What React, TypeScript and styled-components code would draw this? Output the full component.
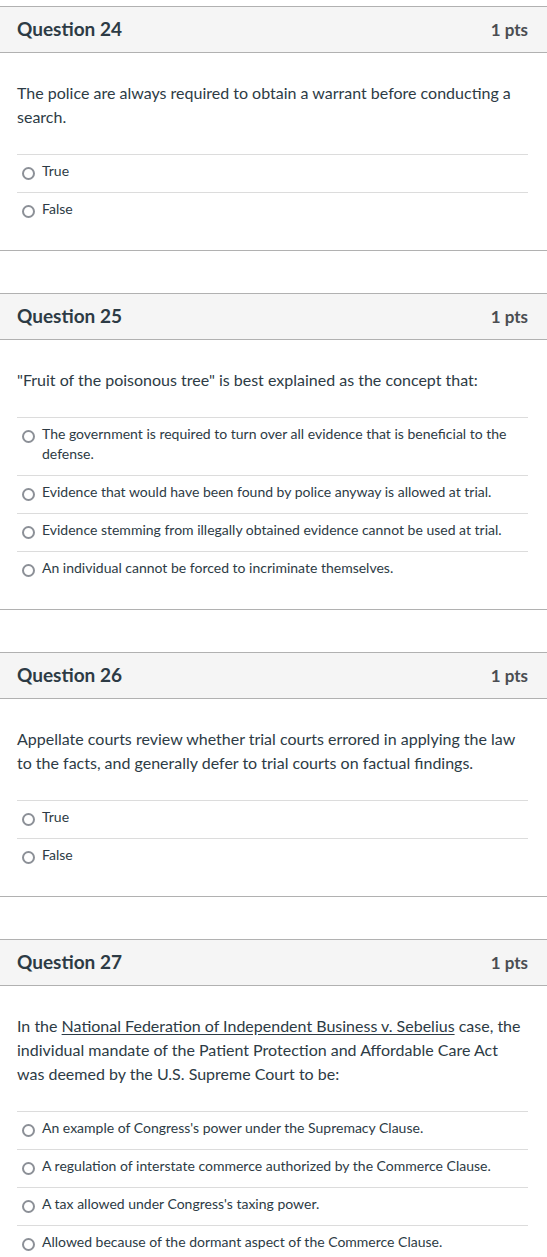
import React from "react";
import styled, { createGlobalStyle } from "styled-components";

const GlobalStyle = createGlobalStyle`
  html, body { margin: 0; padding: 0; background: #ffffff; }
  body { font-family: Lato, "Open Sans", Arial, sans-serif; color: #2d3b45; }
  * { box-sizing: border-box; }
`;

const Page = styled.div`
  display: flex;
  flex-direction: column;
  gap: 42px;
  padding-top: 6px;
  width: 547px;
`;

const Card = styled.section`
  border-top: 1px solid #b1b1b1;
  border-bottom: 1px solid #b1b1b1;
  background: #ffffff;
`;

const Header = styled.header`
  display: flex;
  align-items: baseline;
  justify-content: space-between;
  height: 46px;
  padding: 10px 19px 0 17px;
  background: #f5f5f5;
  border-bottom: 1px solid #b1b1b1;
`;

const Title = styled.h2`
  margin: 0;
  font-size: 19px;
  font-weight: 700;
  line-height: 24px;
  color: #2d3b45;
`;

const Points = styled.span`
  font-size: 17px;
  font-weight: 700;
  color: #4a4d52;
`;

const Body = styled.div`
  padding: 28px 19px 20px 17px;
`;

const Prompt = styled.p`
  margin: 0 0 25px;
  font-size: 16px;
  line-height: 24px;
  color: #2d3b45;
`;

const CaseLink = styled.span`
  text-decoration: underline;
  text-underline-offset: 2px;
`;

const Answers = styled.div`
  display: flex;
  flex-direction: column;
`;

const Answer = styled.label`
  display: flex;
  align-items: flex-start;
  gap: 7px;
  padding: 6px 0 11px 5px;
  border-top: 1px solid #dcdcdc;
  font-size: 14px;
  line-height: 20px;
  color: #2d3b45;
`;

const Radio = styled.span`
  flex: 0 0 13px;
  width: 13px;
  height: 13px;
  margin-top: 6px;
  border: 2px solid #8c9097;
  border-radius: 50%;
  background: #ffffff;
`;

const AnswerText = styled.span`
  flex: 1;
`;

type Q = {
  num: number;
  prompt: React.ReactNode;
  answers: string[];
};

const questions: Q[] = [
  {
    num: 24,
    prompt:
      "The police are always required to obtain a warrant before conducting a search.",
    answers: ["True", "False"],
  },
  {
    num: 25,
    prompt: '"Fruit of the poisonous tree" is best explained as the concept that:',
    answers: [
      "The government is required to turn over all evidence that is beneficial to the defense.",
      "Evidence that would have been found by police anyway is allowed at trial.",
      "Evidence stemming from illegally obtained evidence cannot be used at trial.",
      "An individual cannot be forced to incriminate themselves.",
    ],
  },
  {
    num: 26,
    prompt:
      "Appellate courts review whether trial courts errored in applying the law to the facts, and generally defer to trial courts on factual findings.",
    answers: ["True", "False"],
  },
  {
    num: 27,
    prompt: (
      <>
        In the{" "}
        <CaseLink>National Federation of Independent Business v. Sebelius</CaseLink>{" "}
        case, the individual mandate of the Patient Protection and Affordable Care
        Act was deemed by the U.S. Supreme Court to be:
      </>
    ),
    answers: [
      "An example of Congress's power under the Supremacy Clause.",
      "A regulation of interstate commerce authorized by the Commerce Clause.",
      "A tax allowed under Congress's taxing power.",
      "Allowed because of the dormant aspect of the Commerce Clause.",
    ],
  },
];

export default function App() {
  return (
    <>
      <GlobalStyle />
      <Page>
        {questions.map((q) => (
          <Card key={q.num}>
            <Header>
              <Title>Question {q.num}</Title>
              <Points>1 pts</Points>
            </Header>
            <Body>
              <Prompt>{q.prompt}</Prompt>
              <Answers>
                {q.answers.map((a) => (
                  <Answer key={a}>
                    <Radio />
                    <AnswerText>{a}</AnswerText>
                  </Answer>
                ))}
              </Answers>
            </Body>
          </Card>
        ))}
      </Page>
    </>
  );
}
